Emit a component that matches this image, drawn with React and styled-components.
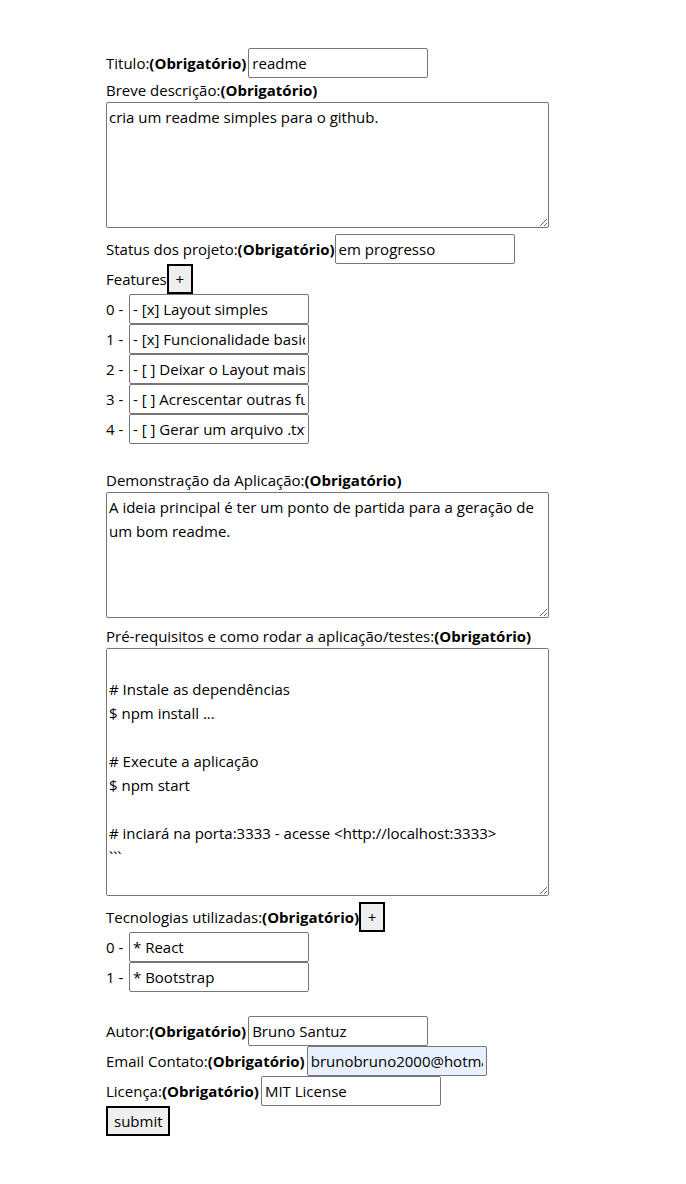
import React, { useEffect, useRef } from 'react';
import styled, { createGlobalStyle } from 'styled-components';

const GlobalStyle = createGlobalStyle`
    body {
        margin: 0;
        background: #fff;
        font-family: "Open Sans", "Noto Sans", sans-serif;
        font-size: 15px;
        color: #000;
    }
`;

const preReqText = [
    '```bash',
    '# Clone este repositório',
    '$ git clone <https://github.com/brunosantuz/readme>',
    '',
    '# Acesse a pasta do projeto no terminal/cmd',
    '$ cd readme',
    '',
    '# Instale as dependências',
    '$ npm install ...',
    '',
    '# Execute a aplicação',
    '$ npm start',
    '',
    '# inciará na porta:3333 - acesse <http://localhost:3333>',
    '```',
    '',
].join('\n');

const features = [
    '- [x] Layout simples',
    '- [x] Funcionalidade basica',
    '- [ ] Deixar o Layout mais bonito',
    '- [ ] Acrescentar outras funcionalidades',
    '- [ ] Gerar um arquivo .txt',
];

const techs = ['* React', '* Bootstrap'];

const App = () => {
    const preReqRef = useRef(null);

    useEffect(() => {
        // textarea was scrolled down to the end in the screenshot
        if (preReqRef.current) {
            preReqRef.current.scrollTop = preReqRef.current.scrollHeight;
        }
    }, []);

    return (
        <>
            <GlobalStyle />
            <Form onSubmit={e => e.preventDefault()}>
                <Row>
                    Titulo:<Required>(Obrigatório)</Required>
                    <TextInput labeled defaultValue='readme' />
                </Row>
                <Line>Breve descrição:<Required>(Obrigatório)</Required></Line>
                <TextArea height={126} defaultValue='cria um readme simples para o github.' />

                <Row>
                    Status dos projeto:<Required>(Obrigatório)</Required>
                    <TextInput defaultValue='em progresso' />
                </Row>
                <Row>
                    Features<PlusButton type='button'>+</PlusButton>
                </Row>
                {features.map((f, i) =>
                    <Row key={i}>
                        <Index>{i} -</Index><TextInput defaultValue={f} />
                    </Row>
                )}
                <Spacer />

                <Line>Demonstração da Aplicação:<Required>(Obrigatório)</Required></Line>
                <TextArea
                    height={126}
                    defaultValue='A ideia principal é ter um ponto de partida para a geração de um bom readme.'
                />

                <Line>Pré-requisitos e como rodar a aplicação/testes:<Required>(Obrigatório)</Required></Line>
                <TextArea ref={preReqRef} height={248} defaultValue={preReqText} />

                <Row>
                    Tecnologias utilizadas:<Required>(Obrigatório)</Required>
                    <PlusButton type='button'>+</PlusButton>
                </Row>
                {techs.map((t, i) =>
                    <Row key={i}>
                        <Index>{i} -</Index><TextInput defaultValue={t} />
                    </Row>
                )}
                <Spacer />

                <Row>
                    Autor:<Required>(Obrigatório)</Required>
                    <TextInput labeled defaultValue='Bruno Santuz' />
                </Row>
                <Row>
                    Email Contato:<Required>(Obrigatório)</Required>
                    <TextInput labeled autofilled defaultValue='brunobruno2000@hotmail.com' />
                </Row>
                <Row>
                    Licença:<Required>(Obrigatório)</Required>
                    <TextInput labeled defaultValue='MIT License' />
                </Row>
                <Row>
                    <SubmitButton type='submit'>submit</SubmitButton>
                </Row>
            </Form>
        </>
    );
};

const Form = styled.form`
    width: 474px;
    margin: 0 auto;
    padding: 48px 0 40px;
    display: flex;
    flex-direction: column;
    align-items: flex-start;
`;

const Row = styled.div`
    display: flex;
    align-items: center;
    height: 30px;
    white-space: nowrap;
`;

const Line = styled.div`
    height: 24px;
    line-height: 24px;
    white-space: nowrap;
`;

const Spacer = styled.div`
    height: 24px;
`;

const Index = styled.span`
    width: 23px;
`;

const Required = styled.b`
    font-weight: 700;
`;

const TextInput = styled.input.withConfig({
    shouldForwardProp: prop => !['labeled', 'autofilled'].includes(prop),
})`
    box-sizing: border-box;
    width: 180px;
    height: 30px;
    margin: 0 0 0 ${props => props.labeled ? 2 : 0}px;
    padding: 1px 3px;
    border: 1px solid #767676;
    border-radius: 2px;
    font: inherit;
    color: #000;
    background: ${props => props.autofilled ? '#e8f0fe' : '#fff'};
    outline: none;
`;

const TextArea = styled.textarea`
    box-sizing: border-box;
    width: 443px;
    height: ${props => props.height}px;
    margin: 0 0 6px;
    padding: 2px;
    border: 1px solid #767676;
    border-radius: 2px;
    font: inherit;
    line-height: 24px;
    color: #000;
`;

const PlusButton = styled.button`
    box-sizing: border-box;
    width: 26px;
    height: 30px;
    margin: 0;
    padding: 0;
    border: 2px solid #000;
    background: #efefef;
    font-family: inherit;
    font-size: 15px;
    color: #000;
`;

const SubmitButton = styled.button`
    box-sizing: border-box;
    width: 64px;
    height: 30px;
    margin: 0;
    padding: 0 6px;
    border: 2px solid #000;
    background: #efefef;
    font: inherit;
    color: #000;
`;

export default App;
